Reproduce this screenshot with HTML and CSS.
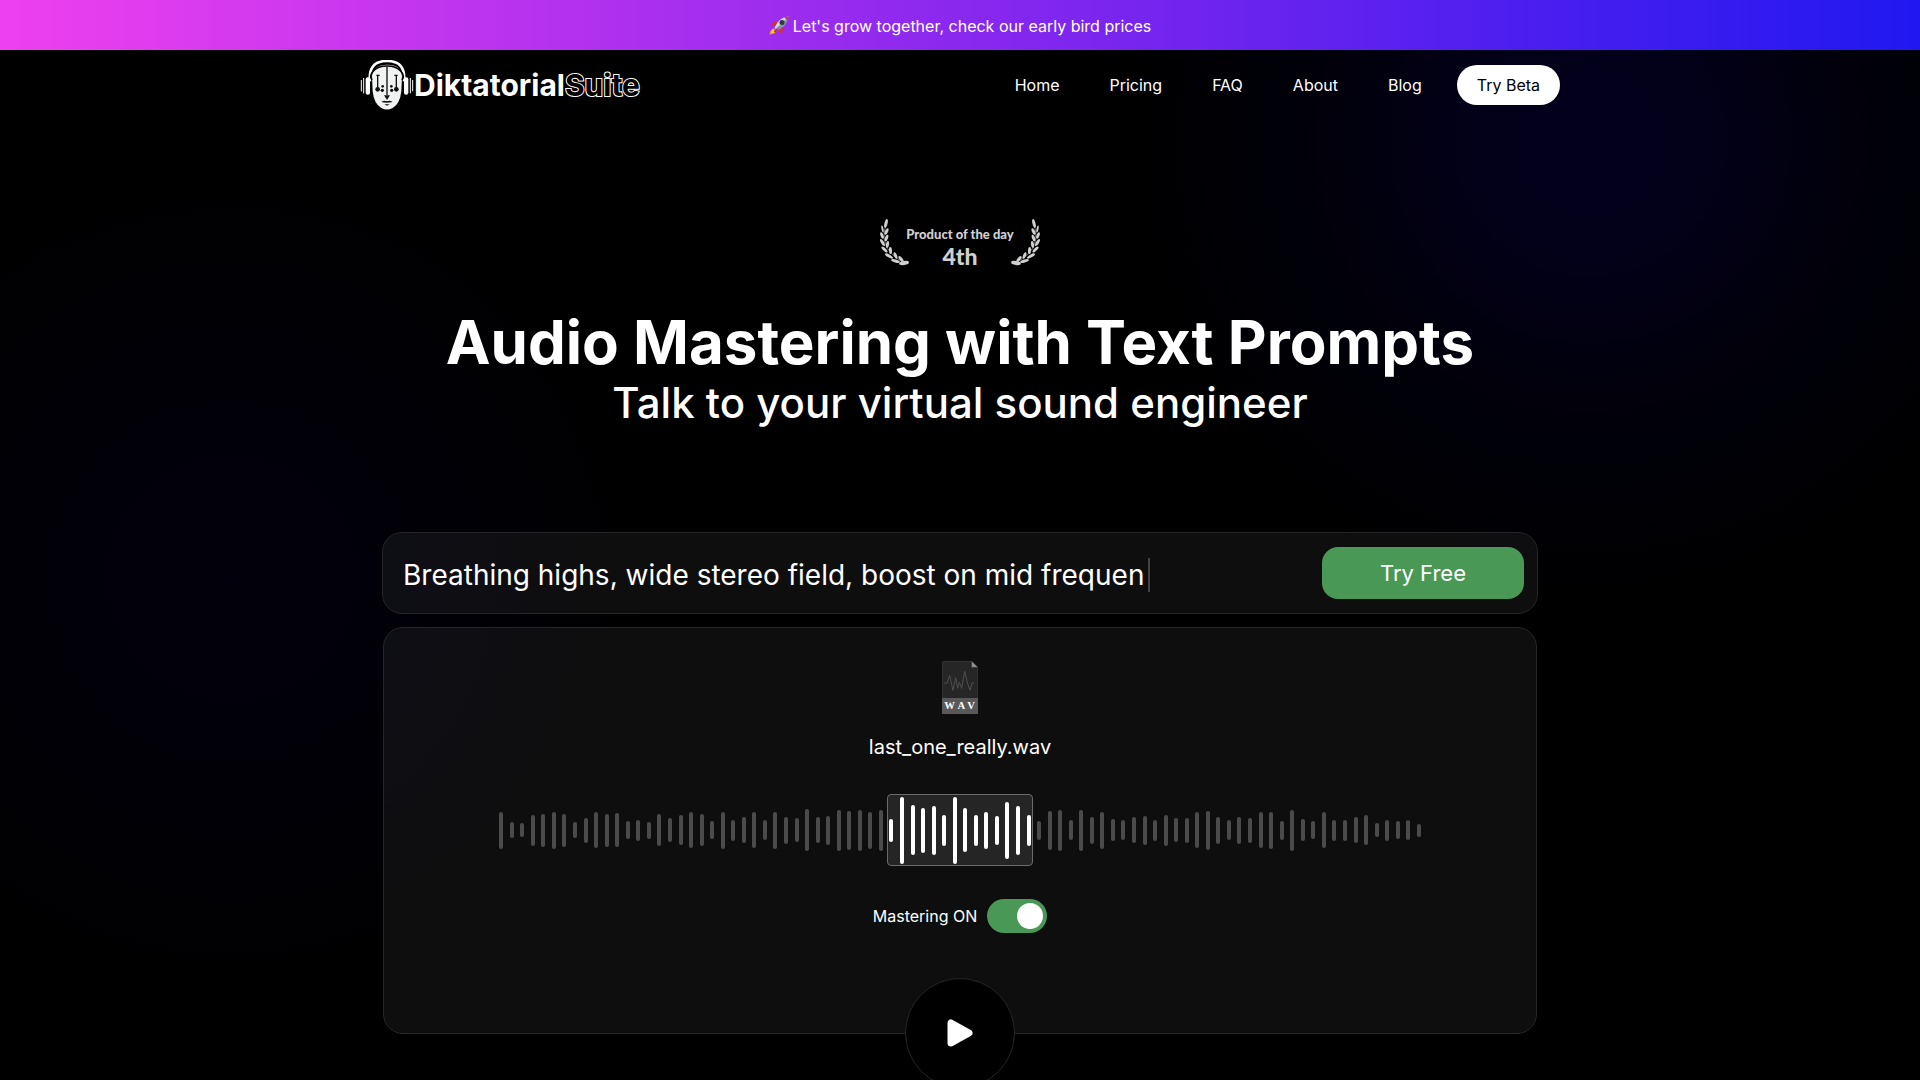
FILE: index.html
```html
<!DOCTYPE html>
<html lang="en">
<head>
<meta charset="utf-8">
<meta name="viewport" content="width=device-width, initial-scale=1">
<title>Diktatorial Suite</title>
<link rel="stylesheet" href="styles.css">
</head>
<body>
<a class="promo" href="#pricing">
  <svg class="rocket" viewBox="0 0 40 40" aria-hidden="true">
    <path d="M13 18 4 19q4-8 14-8zM22 27l-1 9q8-4 8-14z" fill="#d8321f"/>
    <path d="M9 25q-6 1-8 12 11-1 14-7z" fill="#f5a81c"/>
    <path d="M10 28q-4 2-5 6 5-1 7-4z" fill="#fff06a"/>
    <path d="M11 24Q19 3 39 1 37 20 16 29z" fill="#8298ac"/>
    <path d="M11 24Q19 3 39 1L14 27z" fill="#c5d5e2"/>
    <path d="M30 3q5-2 9-2 0 4-2 9-1-5-7-7z" fill="#c9402c"/>
    <circle cx="26" cy="13" r="5" fill="#31394a"/>
    <path d="m9 31 13-12-9 14z" fill="#c22a1c"/>
  </svg>
  <span>Let's grow together, check our early bird prices</span>
</a>

<header class="header">
  <a class="logo" href="#home" aria-label="Diktatorial Suite">
    <svg class="logo-mark" viewBox="0 0 162 150" aria-hidden="true">
      <path d="M30 64Q24 3 81 3t51 61" fill="none" stroke="#fff" stroke-width="8"/>
      <path d="M36 48Q40 15 81 14t45 34l-2 46q-4 38-26 50-17 9-34 0-22-12-26-50z" fill="#f1f3f3"/>
      <path d="M36 60q-9-13 4-27 13-15 41-15t41 15q13 14 4 27" fill="none" stroke="#000" stroke-width="5"/>
      <rect x="17" y="52" width="13" height="52" rx="6" fill="#fff"/>
      <rect x="132" y="52" width="13" height="52" rx="6" fill="#fff"/>
      <path d="M11 54v46M4 60v34M151 54v46M158 60v34" stroke="#fff" stroke-width="3"/>
      <path d="M81 20v86M53 44v43M109 44v43M49 46h10M103 46h10" stroke="#111" stroke-width="4" fill="none"/>
      <g fill="#111"><circle cx="53" cy="88" r="7"/><circle cx="109" cy="88" r="7"/><circle cx="68" cy="79" r="4"/><circle cx="94" cy="79" r="4"/><circle cx="67" cy="91" r="5"/><circle cx="95" cy="91" r="5"/><path d="M72 106h18l-9 14zM64 126q9-6 17-2 8-4 17 2-17 5-34 0zM73 133h16l-8 4z"/></g>
    </svg>
    <span class="logo-name">Diktatorial</span><span class="logo-suite">Suite</span>
  </a>
  <nav class="nav">
    <a href="#home">Home</a>
    <a href="#pricing">Pricing</a>
    <a href="#faq">FAQ</a>
    <a href="#about">About</a>
    <a href="#blog">Blog</a>
    <a class="beta" href="#beta">Try Beta</a>
  </nav>
</header>

<main class="hero">
  <div class="award">
    <svg class="laurel" viewBox="0 0 60 96" aria-hidden="true"><use href="#branch"/></svg>
    <p class="award-text"><span class="award-title">Product of the day</span><span class="award-rank">4th</span></p>
    <svg class="laurel laurel-right" viewBox="0 0 60 96" aria-hidden="true">
      <g id="branch" fill="#d0d0d0">
        <path d="M10 20Q0 64 46 88" fill="none" stroke="#d0d0d0" stroke-width="1"/>
        <ellipse cx="12" cy="11" rx="3" ry="9" transform="rotate(15 12 11)"/>
        <ellipse cx="5" cy="22" rx="2" ry="7" transform="rotate(-12 5 22)"/>
        <ellipse cx="13" cy="27" rx="3" ry="7" transform="rotate(25 13 27)"/>
        <ellipse cx="4" cy="35" rx="3" ry="7" transform="rotate(-20 4 35)"/>
        <ellipse cx="13" cy="40" rx="3" ry="7" transform="rotate(20 13 40)"/>
        <ellipse cx="5" cy="49" rx="3" ry="8" transform="rotate(-30 5 49)"/>
        <ellipse cx="15" cy="53" rx="3" ry="7" transform="rotate(8 15 53)"/>
        <ellipse cx="9" cy="63" rx="3" ry="8" transform="rotate(-45 9 63)"/>
        <ellipse cx="21" cy="65" rx="3" ry="7" transform="rotate(-5 21 65)"/>
        <ellipse cx="18" cy="76" rx="3" ry="9" transform="rotate(-60 18 76)"/>
        <ellipse cx="31" cy="75" rx="3" ry="7" transform="rotate(-22 31 75)"/>
        <ellipse cx="31" cy="86" rx="3" ry="9" transform="rotate(-74 31 86)"/>
        <ellipse cx="42" cy="82" rx="3" ry="7" transform="rotate(-40 42 82)"/>
        <ellipse cx="48" cy="90" rx="4" ry="10" transform="rotate(-100 48 90)"/>
      </g>
    </svg>
  </div>

  <h1 class="title">Audio Mastering with Text Prompts</h1>
  <h2 class="subtitle">Talk to your virtual sound engineer</h2>

  <section class="demo">
    <div class="prompt">
      <p class="prompt-text">Breathing highs, wide stereo field, boost on mid frequen<span class="caret"></span></p>
      <button class="try-free" type="button">Try Free</button>
    </div>
    <div class="player">
      <svg class="file-icon" viewBox="0 0 108 159" aria-hidden="true">
        <path d="M5 1h84l18 18v139H1V5q0-4 4-4z" fill="#262626" stroke="#454545" stroke-width="2"/>
        <path d="M89 1v18h18z" fill="#8c8c8c"/>
        <path d="M7 66h8l8-23 10 45 8-38 6 32 5-18 7 18 9-51 9 37 7 20 6-22h6" fill="none" stroke="#505050" stroke-width="3"/>
        <path d="M0 111h108v48H0z" fill="#595959"/>
        <g class="file-type" text-anchor="middle"><text x="23" y="145">W</text><text x="58" y="145">A</text><text x="87" y="145">V</text></g>
      </svg>
      <p class="file-name">last_one_really.wav</p>
      <div class="wave" id="wave"><div class="selection"></div></div>
      <label class="mastering">Mastering ON<input class="switch" type="checkbox" role="switch" checked></label>
      <button class="play" type="button" aria-label="Play">
        <svg class="play-icon" viewBox="0 0 26 28" aria-hidden="true"><path d="M4 4v20l18-10z" fill="#fff" stroke="#fff" stroke-width="7" stroke-linejoin="round"/></svg>
      </button>
    </div>
  </section>
</main>
<script src="script.js"></script>
</body>
</html>
```
FILE: styles.css
```css
* { box-sizing: border-box; }

body {
  margin: 0;
  min-height: 100vh;
  overflow: hidden;
  color: #fff;
  font-family: Inter, "Liberation Sans", sans-serif;
  background:
    radial-gradient(circle 480px at 1590px 140px, #03001e, #03001a 20%, #01000b 55%, transparent),
    radial-gradient(circle 440px at 230px 580px, #02000c, #010007 50%, transparent),
    #000;
}

a { color: inherit; text-decoration: none; }
p, h1, h2 { margin: 0; }
button { border: 0; padding: 0; font: inherit; color: inherit; cursor: pointer; }

.promo {
  display: flex;
  align-items: center;
  justify-content: center;
  gap: 4px;
  height: 50px;
  padding-top: 2px;
  font-size: 16px;
  background: linear-gradient(90deg, #ee40ee, #8a28ee 50%, #2018f0);
}
.rocket { width: 20px; height: 20px; }

.header {
  display: flex;
  align-items: center;
  justify-content: space-between;
  max-width: 1200px;
  height: 70px;
  margin: 0 auto;
}
.logo { display: flex; align-items: center; font-size: 30px; }
.logo-mark { width: 54px; height: 50px; }
.logo-name { font-weight: 700; }
.logo-suite { font-weight: 700; color: #000; -webkit-text-stroke: 2px #fff; paint-order: stroke fill; }

.nav { display: flex; align-items: center; font-size: 16px; }
.nav a { padding: 0 25px; line-height: 40px; }
.nav .beta {
  margin-left: 10px;
  padding: 0 20px;
  border-radius: 20px;
  color: #000;
  background: #fff;
}

.hero { display: flex; flex-direction: column; align-items: center; padding: 98px 20px 0; }

.award { display: flex; justify-content: space-between; width: 160px; height: 50px; color: #d0d0d0; }
.laurel { width: 30px; height: 48px; overflow: visible; }
.laurel-right { transform: scaleX(-1); }
.award-text {
  display: flex;
  flex-direction: column;
  align-items: center;
  margin: 0 -10px;
  padding-top: 8px;
  font-family: Lato, sans-serif;
  font-weight: 900;
  white-space: nowrap;
}
.award-title { font-size: 13px; line-height: 16px; }
.award-rank { font-size: 23px; line-height: 28px; }

.title { margin-top: 36px; font-size: 60px; line-height: 76px; font-weight: 700; text-align: center; }
.subtitle { font-size: 42px; line-height: 46px; font-weight: 500; text-align: center; }

.demo { width: 100%; max-width: 1156px; margin-top: 106px; }
.prompt, .player { border: 1px solid #262628; border-radius: 20px; background: rgba(255, 255, 255, 0.055); }
.prompt {
  display: flex;
  align-items: center;
  justify-content: space-between;
  height: 82px;
  padding: 0 13px 0 20px;
}
.prompt-text { display: flex; align-items: center; padding-top: 4px; font-size: 28px; white-space: nowrap; }
.caret { width: 2px; height: 34px; margin-left: 4px; background: #444; }
.try-free { width: 202px; height: 52px; border-radius: 16px; font-size: 22px; background: #4a9856; }

.player {
  position: relative;
  display: flex;
  flex-direction: column;
  align-items: center;
  height: 407px;
  margin: 13px 1px 0;
  padding-top: 33px;
}
.file-icon { width: 36px; height: 53px; }
.file-type { font: 700 32px "Liberation Serif", serif; fill: #fff; }
.file-name { margin-top: 20px; font-size: 20px; line-height: 26px; }

.wave {
  position: relative;
  display: flex;
  align-items: center;
  justify-content: space-between;
  width: 80%;
  height: 72px;
  margin-top: 34px;
}
.bar { position: relative; width: 4px; border-radius: 2px; background: #4b4b4b; }
.bar-active { background: #fff; }
.selection {
  position: absolute;
  inset: 0 388px;
  border: 1px solid #6b6b6b;
  border-radius: 4px;
  background: #252525;
}

.mastering { display: flex; align-items: center; gap: 10px; margin-top: 33px; font-size: 16px; }
.switch {
  appearance: none;
  display: flex;
  justify-content: flex-end;
  width: 60px;
  height: 34px;
  margin: 0;
  padding: 4px;
  border-radius: 17px;
  background: #4a9856;
}
.switch::before { content: ""; width: 26px; height: 26px; border-radius: 50%; background: #fff; }
.switch:not(:checked) { justify-content: flex-start; background: #555; }

.play {
  position: absolute;
  bottom: -55px;
  display: flex;
  align-items: center;
  justify-content: center;
  width: 110px;
  height: 110px;
  border: 1px solid #262628;
  border-radius: 50%;
  background: #000;
}
.play-icon { width: 26px; height: 28px; }
```
FILE: script.js
```js
// Height of each waveform bar, in pixels
const levels = [
  37, 16, 14, 31, 33, 37, 33, 16, 25, 36, 33, 34, 18, 21, 17, 32, 24, 30, 36, 32, 18, 37,
  21, 26, 36, 20, 37, 27, 24, 42, 26, 29, 41, 39, 41, 37, 41, 23, 67, 50, 45, 49, 31, 67,
  44, 31, 37, 29, 57, 49, 31, 19, 39, 41, 20, 41, 27, 37, 22, 20, 26, 29, 21, 31, 24, 25,
  36, 39, 27, 20, 27, 25, 36, 37, 19, 41, 22, 18, 36, 21, 21, 26, 30, 14, 21, 18, 20, 13
];
const selected = { from: 37, to: 50 };
const wave = document.getElementById("wave");

levels.forEach((level, i) => {
  const bar = document.createElement("span");
  bar.className = i >= selected.from && i <= selected.to ? "bar bar-active" : "bar";
  bar.style.height = level + "px";
  wave.append(bar);
});
```
